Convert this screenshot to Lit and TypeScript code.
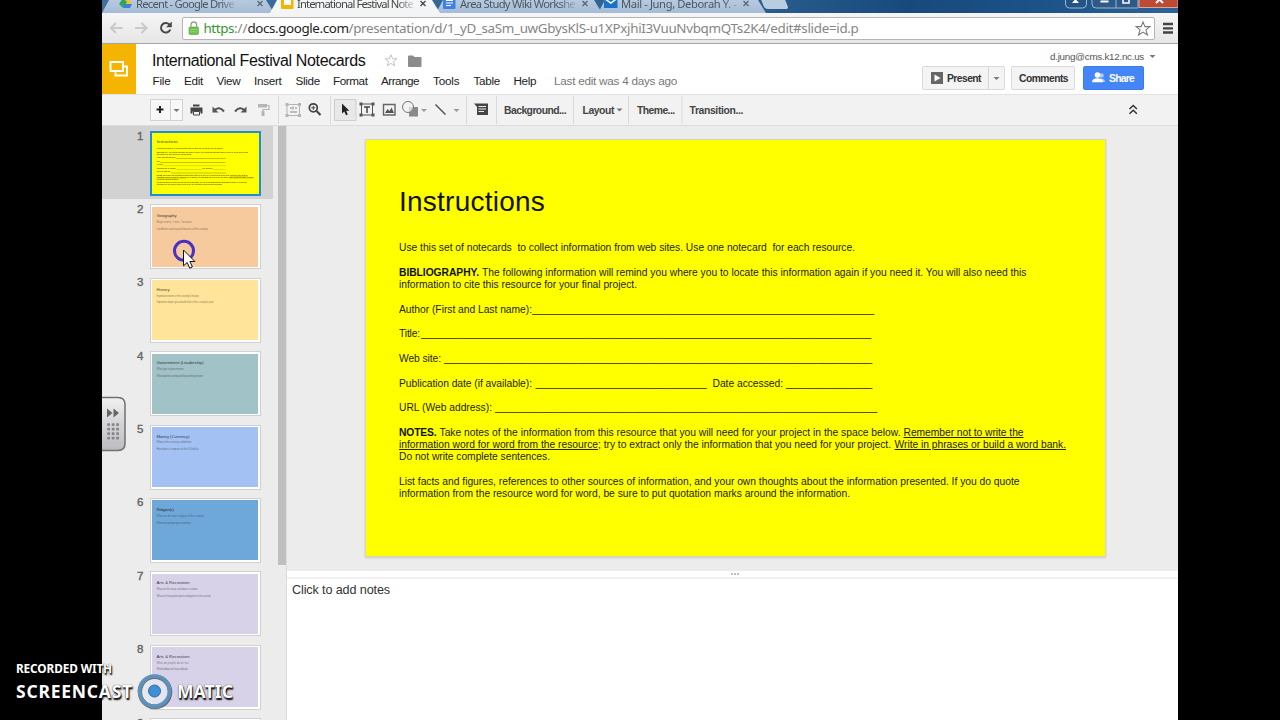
import { LitElement, html, svg, css } from "lit";
import { customElement, property } from "lit/decorators.js";

// A run of text tracked so that it fills a given width.
@customElement("fit-text")
class FitText extends LitElement {
  @property() text = "";
  @property({ type: Number }) w = 0;
  static styles = css`
    :host { display: inline-block; white-space: pre; flex: none; }
    span { text-decoration: inherit; display: inline-block; white-space: pre; }
  `;
  render() {
    return html`<span>${this.text}</span>`;
  }
  updated() {
    const s = this.renderRoot.querySelector("span") as HTMLElement;
    s.style.letterSpacing = "0px";
    const natural = s.offsetWidth ? parseFloat(getComputedStyle(s).width) : this.w;
    s.style.letterSpacing = (this.w - natural) / Math.max(1, this.text.length) + "px";
    this.style.width = this.w + "px";
  }
}

type Seg = [number, number, string, string?];

const blank = (a: number, b: number): Seg => [a, b, "_".repeat(Math.ceil((b - a) / 5.6)), "blank"];

const LINES: Seg[][] = [
  [[399, 855, "Use this set of notecards  to collect information from web sites. Use one notecard  for each resource."]],
  [],
  [[399, 479, "BIBLIOGRAPHY.", "b"], [482, 1026.5, "The following information will remind you where you to locate this information again if you need it. You will also need this"]],
  [[399, 637, "information to cite this resource for your final project."]],
  [],
  [[399, 532, "Author (First and Last name):"], blank(532, 874)],
  [],
  [[399, 420, "Title:"], blank(421, 871)],
  [],
  [[399, 441, "Web site:"], blank(444, 872)],
  [],
  [[399, 532, "Publication date (if available):"], blank(535.5, 706.5), [712.5, 783, "Date accessed:"], blank(786, 872)],
  [],
  [[399, 492, "URL (Web address):"], blank(495, 877)],
  [],
  [[399, 436.5, "NOTES.", "b"], [439.5, 900.5, "Take notes of the information from this resource that you will need for your project in the space below."], [903.5, 1023.5, "Remember not to write the", "u"]],
  [[399, 598, "information word for word from the resource", "u"], [598, 891, "; try to extract only the information that you need for your project."], [894.5, 1066, "Write in phrases or build a word bank.", "u"]],
  [[399, 550, "Do not write complete sentences."]],
  [],
  [[399, 1019.5, "List facts and figures, references to other sources of information, and your own thoughts about the information presented. If you do quote"]],
  [[399, 850, "information from the resource word for word, be sure to put quotation marks around the information."]],
];

const run = (segs: Seg[], start: number) => {
  let at = start;
  return segs.map(([a, b, t, c]) => {
    const m = a - at;
    at = b;
    return html`<fit-text class=${c ?? ""} style="margin-left:${m}px" .text=${t} .w=${b - a}></fit-text>`;
  });
};

@customElement("slide-page")
class SlidePage extends LitElement {
  static styles = css`
    :host { display: block; width: 739px; height: 416px; background: #ff0; color: #25250a;
      font: 10.3px/12.3px "Liberation Sans", Arial, sans-serif; box-sizing: border-box; padding: 44px 0 0 33px; }
    .title { font-size: 28px; line-height: 36px; color: #111100; height: 58.3px; }
    .line { display: flex; height: 12.3px; white-space: pre; }
    .b { font-weight: bold; color: #111100; }
    .u { text-decoration: underline; }
    :host([mini]) .title { color: #443; }
    :host([mini]) .blank { height: 12px; border-bottom: 2.5px solid rgba(60, 60, 10, 0.6); }
    :host([mini]) .b { font-weight: normal; }
  `;
  render() {
    return html`<div class="title"><fit-text .text=${"Instructions"} .w=${146}></fit-text></div>
      ${LINES.map((l) => html`<div class="line">${run(l, 399)}</div>`)}`;
  }
}

const THUMBS = [
  { t: "", w: 0, bg: "#ff0", l: [] as [string, number][] },
  { t: "Geography", w: 20, bg: "#f6ca9c", l: [["Major rivers / cities / location", 35], ["Landforms and natural features of the country", 51]] },
  { t: "History", w: 13, bg: "#ffe499", l: [["Important events in the country's history", 42], ["Important dates you would find in this country's past", 57]] },
  { t: "Government (Leadership)", w: 47, bg: "#a1c3c8", l: [["What type of government", 27], ["Who leads the country and how are they chosen", 46]] },
  { t: "Money (Currency)", w: 33, bg: "#a3c1f3", l: [["What is the currency called here", 35], ["How does it compare to the US dollar", 42]] },
  { t: "Religion(s)", w: 17, bg: "#6ea7da", l: [["What are the main religions of this country", 47], ["Where do people go to worship", 34]] },
  { t: "Arts & Recreation", w: 33, bg: "#d8d2e8", l: [["What are the music and dance customs", 41], ["What are the popular sports and games in this country", 54]] },
  { t: "Arts & Recreation", w: 33, bg: "#d8d2e8", l: [["What do people do for fun", 32], ["What holidays do they celebrate", 31]] },
  { t: "", w: 0, bg: "#d8d2e8", l: [] },
];

// Icons are drawn in toolbar coordinates; each slot shows its own x range.
const slot = (x: number, w: number, y: number, h: number, g: unknown) =>
  html`<svg width=${w} height=${h} viewBox="${x} ${y} ${w} ${h}">${g}</svg>`;
const bar = (x: number, w: number, g: unknown) => slot(x, w, 95, 30, g);
const caret = (x: number, y: number, c = "#777") => svg`<path d="M${x - 3} ${y - 1.5}h6l-3 3z" fill=${c} />`;
const sep = (x: number) => svg`<path d="M${x} 96v28" stroke="#d9d9d9" />`;

@customElement("app-root")
class AppRoot extends LitElement {
  static styles = css`
    :host { display: block; width: 1280px; height: 720px; background: #000; overflow: hidden; position: relative;
      font-family: "Liberation Sans", Arial, sans-serif; }
    * { box-sizing: border-box; }
    svg { display: block; flex: none; }
    .screen { width: 1076px; height: 720px; margin-left: 102px; display: flex; flex-direction: column; overflow: hidden; background: #fff; }
    .strip { height: 13px; flex: none; display: flex; background: linear-gradient(90deg, #3e6f9e 0, #2a608f 60%, #17497d 75%, #1c5389 88%, #2d6396 100%); overflow: hidden; }
    .tab { height: 13px; flex: none; display: flex; align-items: center; background: linear-gradient(#b6cadf, #a5bcd5);
      clip-path: polygon(7px 0, calc(100% - 8px) 0, 100% 100%, 0 100%); color: #4b5763;
      font: 11.2px/14px "Noto Sans", "Open Sans", sans-serif; margin-right: -4px; }
    .tab.on { background: #f4f5f6; color: #444; z-index: 1; position: relative; }
    .tab .lbl { height: 20px; line-height: 20px; margin-top: -6px; flex: none; overflow: hidden;
      -webkit-mask-image: linear-gradient(90deg, #000 86%, rgba(0,0,0,.2)); }
    .newtab { width: 24px; height: 9px; background: #b9cce0; border-radius: 0 0 3px 3px; transform: skewX(22deg); margin-left: 1px; flex: none; }
    .wins { display: flex; margin-left: auto; }
    .nav { height: 31px; padding-top: 1px; flex: none; display: flex; align-items: center; background: linear-gradient(#f5f5f5, #e6e6e6); border-bottom: 1px solid #a5a5a5; }
    .url { width: 973px; height: 23px; flex: none; background: #fff; border: 1px solid #b5b5b5; border-radius: 2px; display: flex; align-items: center;
      font: 13.4px/20px "Noto Sans", "Open Sans", sans-serif; color: #858585; }
    .url fit-text { margin-top: -1px; }
    .url .g { color: #35952f; } .url .k { color: #222; }
    .url .end { margin-left: auto; }
    .head { height: 50px; flex: none; display: flex; }
    .logo { width: 34px; height: 50px; background: #f4b400; flex: none; }
    .titles { width: 640px; padding-left: 16px; flex: none; }
    .trow { display: flex; height: 29px; align-items: center; margin-top: 2px; color: #111; font-size: 16px; }
    .mrow { display: flex; height: 14px; align-items: center; font-size: 11.7px; color: #222; margin-top: -2px; }
    .grey { color: #777; }
    .acct { margin-left: auto; width: 256px; display: flex; flex-direction: column; }
    .mail { display: flex; height: 22px; padding: 2px 0 0 128px; align-items: center; font-size: 9.8px; color: #555; }
    .btns { display: flex; font-size: 10.3px; font-weight: bold; color: #333; }
    .btn { height: 24px; border: 1px solid #dadada; border-radius: 2px; background: #f4f4f4; display: flex; align-items: center; }
    .share { background: #4486f8; border-color: #3a7bed; color: #fff; }
    .tools { height: 32px; flex: none; display: flex; align-items: center; background: #f2f2f2; border-top: 1px solid #e3e3e3; border-bottom: 1px solid #dcdcdc;
      font-size: 10.4px; font-weight: bold; color: #444; }
    .work { flex: 1; display: flex; min-height: 0; background: #ececec; }
    .film { width: 176px; overflow: hidden; flex: none; }
    .item { height: 73.4px; width: 171px; display: flex; padding: 5px 0 0 32px; }
    .item.sel { background: #d2d2d2; }
    .num { width: 16px; font-size: 11.5px; line-height: 12px; color: #666; padding-left: 3px; flex: none; -webkit-text-stroke: .4px #666; margin-top: -1.5px; }
    .thumb { width: 111px; height: 65px; border: 1px solid #d0d0d0; background: #fff; padding: 1.5px; margin-left: -.5px; }
    .sel .thumb { border: 2px solid #1f8fd0; padding: 0; background: #ff0; overflow: hidden; }
    .fill { height: 100%; padding: 5.5px 0 0 4.5px; font-size: 4px; line-height: 7px; color: rgba(20,20,20,.85); overflow: hidden; }
    .fill .s { font-size: 2.7px; color: rgba(50,50,50,.6); line-height: 6.8px; height: 6.8px; }
    .fill .h { height: 7.8px; font-size: 4.3px; }
    .mini { width: 739px; height: 416px; transform: scale(.1455); transform-origin: 0 0; }
    .rail { width: 8px; height: 439px; background: #bfbfbf; flex: none; }
    .main { flex: 1; display: flex; flex-direction: column; border-left: 1px solid #ddd; background: #fff; }
    .stage { height: 445px; flex: none; background: #ececec; padding: 13px 0 0 78px; }
    .edge { width: 741px; height: 418px; border: 1px solid #d8d8b8; box-shadow: 0 1px 2px rgba(0,0,0,.15); }
    .split { height: 8px; flex: none; background: #fff; border-bottom: 2px solid #f1f1f1; display: flex; justify-content: center; padding-left: 4px; }
    .notes { padding: 3px 0 0 5px; font-size: 12.6px; line-height: 16px; color: #333; }
    .over { position: absolute; }
    .drawer { left: 102px; top: 396px; }
    .cursor { left: 170px; top: 236px; }
    .mark { left: 16px; top: 658px; color: #fff; font: bold 11.8px/20px "Noto Sans", "Open Sans", sans-serif; text-shadow: 1px 1.5px 1.5px #000, 0 0 1px #000; }
    .big { display: flex; align-items: center; font-size: 17.5px; height: 36px; margin-top: -5px; }
  `;

  tab(w: number, on: boolean, icon: unknown, pad: number, lbl: string, lw: number, gap: number) {
    return html`<div class="tab ${on ? "on" : ""}" style="width:${w}px;padding-left:${pad}px">
      ${icon}<div class="lbl"><fit-text .text=${lbl} .w=${lw}></fit-text></div>
      <svg width="8" height="13" style="margin-left:${gap}px"><path d="M1.500 1l5 5M6.500 1l-5 5" stroke=${on ? "#444" : "#596673"} stroke-width="1.300" /></svg>
    </div>`;
  }

  render() {
    const star = (x: number, y: number, s: number, c: string) =>
      svg`<path transform="translate(${x} ${y}) scale(${s})" d="M0-7.500l2 5h5.300l-4.200 3.500 1.600 5.300L0 3.200l-4.700 3.100 1.600-5.300-4.200-3.500H-2z" fill="#fff" stroke=${c} stroke-width="1.100" />`;
    return html`
      <div class="screen">
        <div class="strip">
          ${this.tab(172, false, html`<svg width="17" height="13"><path d="M2 3L5-2h4l4 6H7z" fill="#f4c430" /><path d="M0 4L4-2l4 4-4 6z" fill="#2da565" /><path d="M4 8l2-4h7l-2 4z" fill="#3b7de0" /></svg>`, 17, "Recent - Google Drive", 98, 22)}
          ${this.tab(170, true, html`<svg width="16" height="13"><rect x="0" y="-4" width="12.500" height="13" rx="1" fill="#f4b400" /><rect x="3" y="-1" width="7" height="6" fill="#fff" /></svg>`, 11, "International Festival Note", 116, 6)}
          ${this.tab(166, false, html`<svg width="17" height="13"><rect x="0" y="-4" width="12.500" height="13" rx="1" fill="#3f80e8" /><path d="M3 .5h7M3 3h7M3 5.500h5" stroke="#fff" stroke-width="1.200" /></svg>`, 7, "Area Study Wiki Workshe", 115, 6)}
          ${this.tab(168, false, html`<svg width="17" height="13"><rect x="0" y="-3" width="13.500" height="11" fill="#1772c8" /><path d="M.5-1.500l6.300 4.500L13-1.500" fill="none" stroke="#fff" stroke-width="1.500" /></svg>`, 6, "Mail - Jung, Deborah Y. - ", 118, 3)}
          <div class="newtab"></div>
          <div class="wins">
            <svg width="113" height="13" viewBox="1065 0 113 13"><path d="M1065.500-3v7q0 4 4 4h13q4 0 4-4v-7" fill="#245485" stroke="#9bb6d0" /><path d="M1092-3v7q0 4 4 4h42V-3z" fill="#2d5a88" stroke="#9bb6d0" /><path d="M1139-3v10.500h39V-3z" fill="#bd4a35" stroke="#d9a79c" /><path d="M1116 0v8" stroke="#9bb6d0" /><path d="M1072 3l3.500-4 3.500 4z" fill="#fff" /><path d="M1100.500.500h8v2h-8z" fill="#fff" /><path d="M1123-1h6v4h-6z" fill="none" stroke="#fff" stroke-width="1.500" /><path d="M1156 3l6-6M1163 3l-6-6" stroke="#fff" stroke-width="2" /></svg>
          </div>
        </div>
        <div class="nav">
          ${slot(102, 79.5, 14, 29, svg`
            <path d="M122.500 28h-11M116 23l-5 5 5 5M135 28h11M141.500 23l5 5-5 5" fill="none" stroke="#c9c9c9" stroke-width="2" />
            <path d="M169.300 24.500a4.800 4.800 0 1 0 1 5" fill="none" stroke="#484848" stroke-width="2" /><path d="M171.800 21.500v5.800h-5.800z" fill="#484848" />`)}
          <div class="url">
            ${slot(182, 21, 18, 21, svg`<rect x="188" y="27" width="9.500" height="7.500" rx="1" fill="#6cc04c" stroke="#58a53e" stroke-width=".6" /><path d="M190 27v-2.200a2.800 2.800 0 0 1 5.600 0V27" fill="none" stroke="#8fa889" stroke-width="1.300" /><path d="M189 29.500h7.500M189 31.800h7.500" stroke="#9edb82" stroke-width=".8" />`)}
            <fit-text class="g" .text=${"https"} .w=${30.5}></fit-text><fit-text .text=${"://"} .w=${13.5}></fit-text><fit-text class="k" .text=${"docs.google.com"} .w=${101}></fit-text><fit-text .text=${"/presentation/d/1_yD_saSm_uwGbysKlS-u1XPxjhiI3VuuNvbqmQTs2K4/edit#slide=id.p"} .w=${510}></fit-text>
            <svg class="end" width="22" height="21" viewBox="1132 18 22 21">${star(1143, 29, 0.95, "#777")}</svg>
          </div>
          ${slot(1155, 23, 14, 29, svg`<path d="M1163 24h10M1163 28.300h10M1163 32.500h10" stroke="#444" stroke-width="2.300" />`)}
        </div>
        <div class="head">
          <svg class="logo" viewBox="102 44 34 50"><path d="M110.500 62h12.500v9h-12.500z" fill="none" stroke="#fff" stroke-width="2" /><path d="M124 66.500h3v9h-11.500v-3" fill="none" stroke="#fff" stroke-width="2" /></svg>
          <div class="titles">
            <div class="trow"><fit-text .text=${"International Festival Notecards"} .w=${213.5}></fit-text>
              ${slot(366, 64, 46, 29, svg`${star(391, 60.8, 0.8, "#bbb")}<path d="M408 56.500q0-1 1-1h4l1.500 1.500h6q1 0 1 1v8q0 1-1 1H409q-1 0-1-1z" fill="#8b8b8b" />`)}
            </div>
            <div class="mrow">${run([[152.5, 170.5, "File"], [184, 203, "Edit"], [216.5, 240.5, "View"], [254, 281.5, "Insert"], [295.5, 320, "Slide"], [333, 367.5, "Format"], [381, 419, "Arrange"], [433, 459.5, "Tools"], [473.5, 500, "Table"], [513.5, 536, "Help"], [554, 677, "Last edit was 4 days ago", "grey"]], 152)}</div>
          </div>
          <div class="acct">
            <div class="mail"><fit-text .text=${"d.jung@cms.k12.nc.us"} .w=${94}></fit-text>${slot(1144, 16, 46, 20, caret(1152.5, 56.5))}</div>
            <div class="btns">
              <div class="btn" style="width:83px">${slot(923, 24, 66, 24, svg`<rect x="931" y="72" width="12" height="12" fill="#666" /><path d="M934.500 74.500v7l6-3.500z" fill="#fff" />`)}
                <fit-text .text=${"Present"} .w=${34}></fit-text>${slot(981, 22, 66, 22, svg`<path d="M988.500 66v24" stroke="#d5d5d5" />${caret(996.5, 77.5)}`)}</div>
              <div class="btn" style="width:64px;margin-left:6px;padding-left:7px"><fit-text .text=${"Comments"} .w=${49}></fit-text></div>
              <div class="btn share" style="width:61px;margin-left:8px">${slot(1084, 25, 66, 24, svg`<circle cx="1101.500" cy="75.500" r="2.300" fill="#a9c8fc" /><path d="M1099 82h6q0-3.500-4-3.500z" fill="#a9c8fc" /><circle cx="1097.500" cy="75" r="2.800" fill="#fff" /><path d="M1092 82.300q0-4 5.500-4t5.500 4z" fill="#fff" />`)}<fit-text .text=${"Share"} .w=${25}></fit-text></div>
            </div>
          </div>
        </div>
        <div class="tools">
          ${bar(102, 83, svg`<rect x="150.500" y="99.500" width="32" height="21" fill="#f8f8f8" stroke="#d0d0d0" /><path d="M170.500 100v20" stroke="#d0d0d0" /><path d="M156.500 109.500h7M160 106v7" stroke="#222" stroke-width="2" />${caret(176.5, 110.5)}`)}
          ${bar(185, 22, svg`<path d="M193 104.500h6.500v2H193z" fill="#444" /><path d="M190.500 107.500h12v6h-2v-2h-8v2h-2z" fill="#444" /><path d="M193.500 111.500h6v3.500h-6z" fill="#f2f2f2" stroke="#444" />`)}
          ${bar(207, 22, svg`<path d="M214 110.500q5-5 10 1" fill="none" stroke="#555" stroke-width="2" /><path d="M212.500 106.500v6h6z" fill="#555" />`)}
          ${bar(229, 22, svg`<path d="M235 111.500q5-6 10-1" fill="none" stroke="#555" stroke-width="2" /><path d="M246.500 106.500v6h-6z" fill="#555" />`)}
          ${bar(251, 31, svg`<path d="M258 104h9v3.500h-9z" fill="#b5b5b5" /><path d="M267 105.500h2v4h-6v2" fill="none" stroke="#b5b5b5" stroke-width="1.200" /><path d="M261.500 111h3v5h-3z" fill="#b5b5b5" />${sep(278.5)}`)}
          ${bar(282, 22, svg`<path d="M287 104.500h12.500v11H287z" fill="none" stroke="#b5b5b5" /><path d="M285.500 103h3v3h-3zM298 103h3v3h-3zM285.500 114h3v3h-3zM298 114h3v3h-3z" fill="#b5b5b5" /><path d="M290 108h2M295 108h2M293 106.500v3M290 112h7" stroke="#aaa" stroke-width="1.500" />`)}
          ${bar(304, 28, svg`<circle cx="313.300" cy="107.800" r="4" fill="none" stroke="#444" stroke-width="1.700" /><path d="M316.500 111l4 4" stroke="#444" stroke-width="2.200" /><path d="M311.300 107.800h4M313.300 105.800v4" stroke="#444" />${sep(330.5)}`)}
          ${bar(332, 25, svg`<rect x="334.500" y="99.500" width="21.500" height="21" fill="#e8e8e8" stroke="#cfcfcf" /><path d="M342 103.500v10l2.300-2 1.700 3.800 1.800-.8-1.600-3.700h3.200z" fill="#222" />`)}
          ${bar(357, 22, svg`<path d="M361.500 104h11v11h-11z" fill="none" stroke="#555" /><path d="M359.500 102.500h3v3h-3zM371.500 102.500h3v3h-3zM359.500 113.500h3v3h-3zM371.500 113.500h3v3h-3z" fill="#555" /><path d="M364 107h6M367 107v6" stroke="#444" stroke-width="1.500" />`)}
          ${bar(379, 22, svg`<path d="M383.500 104.500h11.500v10.500h-11.500z" fill="#f2f2f2" stroke="#666" stroke-width="1.400" /><path d="M385 113l2.500-4 2 2 2-3.500 2.500 5.500z" fill="#555" />`)}
          ${bar(401, 29, svg`<path d="M409 107h9v9.500h-9z" fill="#8a8a8a" /><circle cx="408" cy="107" r="5.500" fill="#f2f2f2" fill-opacity=".7" stroke="#777" />${caret(424, 110.5, "#999")}`)}
          ${bar(430, 38, svg`<path d="M435.500 104.500l10 10" stroke="#555" stroke-width="1.500" />${caret(456.5, 110.5, "#999")}${sep(466.5)}`)}
          ${bar(468, 36, svg`<path d="M474 103.500h14v11.500h-11v-8z" fill="#444" /><path d="M478.500 106.500h7.500M478.500 109h7.500M478.500 111.500h5.500" stroke="#eee" />${sep(496.5)}`)}
          <fit-text .text=${"Background..."} .w=${62}></fit-text>
          ${bar(566, 16.5, sep(573.5))}
          <fit-text .text=${"Layout"} .w=${31.5}></fit-text>
          ${bar(614, 23, svg`${caret(619.5, 110)}${sep(628.5)}`)}
          <fit-text .text=${"Theme..."} .w=${37.5}></fit-text>
          ${bar(674.5, 15, sep(681.5))}
          <fit-text .text=${"Transition..."} .w=${53.5}></fit-text>
          ${bar(743, 435, svg`<path d="M1129.500 109l3.700-3.500 3.700 3.500M1129.500 113.800l3.700-3.500 3.700 3.500" fill="none" stroke="#333" stroke-width="1.500" />`)}
        </div>
        <div class="work">
          <div class="film">
            ${THUMBS.map((s, i) => html`<div class="item ${i ? "" : "sel"}">
              <div class="num">${i + 1}</div>
              <div class="thumb">${i === 0
                ? html`<div class="mini"><slide-page mini></slide-page></div>`
                : html`<div class="fill" style="background:${s.bg}">
                    ${s.t ? html`<div class="h"><fit-text .text=${s.t} .w=${s.w}></fit-text></div>` : ""}
                    ${s.l.map(([t, w]) => html`<div class="s"><fit-text .text=${t} .w=${w}></fit-text></div>`)}
                  </div>`}</div>
            </div>`)}
          </div>
          <div class="rail"></div>
          <div class="main">
            <div class="stage"><div class="edge"><slide-page></slide-page></div></div>
            <div class="split"><svg width="10" height="6"><path d="M1 3h2M4 3h2M7 3h2" stroke="#aaa" stroke-width="1.500" /></svg></div>
            <div class="notes"><fit-text .text=${"Click to add notes"} .w=${98}></fit-text></div>
          </div>
        </div>
      </div>
      <svg class="over drawer" width="26" height="57" viewBox="102 396 26 57">
        <defs><linearGradient id="dg" x1="0" y1="0" x2="0" y2="1"><stop offset="0" stop-color="#f1f1f1" /><stop offset=".5" stop-color="#d4d4d8" /><stop offset="1" stop-color="#bcbcc0" /></linearGradient></defs>
        <path d="M101 397.500h17q7 0 7 7v39q0 7-7 7h-17z" fill="url(#dg)" stroke="#707070" stroke-width="1.500" />
        <path d="M107 408.500v9l5.500-4.500zM113.500 408.500v9l5.500-4.500z" fill="#666" />
        ${[424.5, 429, 433.5, 438].map((y) => [108.5, 113, 117.5].map((x) => svg`<rect x=${x - 1.3} y=${y - 1.3} width="2.800" height="2.800" rx=".8" fill="#858585" />`))}
      </svg>
      <svg class="over cursor" width="30" height="36" viewBox="170 236 30 36">
        <circle cx="184" cy="250.800" r="9.500" fill="none" stroke="#4a30c4" stroke-width="3" />
        <path d="M183.500 250v15.800l3.700-3.300 2.500 5.700 2.700-1.200-2.500-5.500h5z" fill="#fff" stroke="#111" />
      </svg>
      <div class="over mark">
        <fit-text .text=${"RECORDED WITH"} .w=${96}></fit-text>
        <div class="big"><fit-text .text=${"SCREENCAST"} .w=${117}></fit-text>
          <svg width="44" height="38" viewBox="133 672.500 44 38"><circle cx="155" cy="692.500" r="15" fill="#fff" fill-opacity=".35" stroke="#222" stroke-width="4.500" stroke-opacity=".6" /><circle cx="154.500" cy="691.500" r="12" fill="#e4e6ee" fill-opacity=".85" /><circle cx="154.500" cy="691.500" r="15" fill="none" stroke="#5a93c0" stroke-width="3.600" /><circle cx="154.500" cy="691.500" r="6" fill="#3f8fd8" stroke="#3a6c98" /></svg>
          <fit-text .text=${"MATIC"} .w=${56}></fit-text></div>
      </div>`;
  }
}
